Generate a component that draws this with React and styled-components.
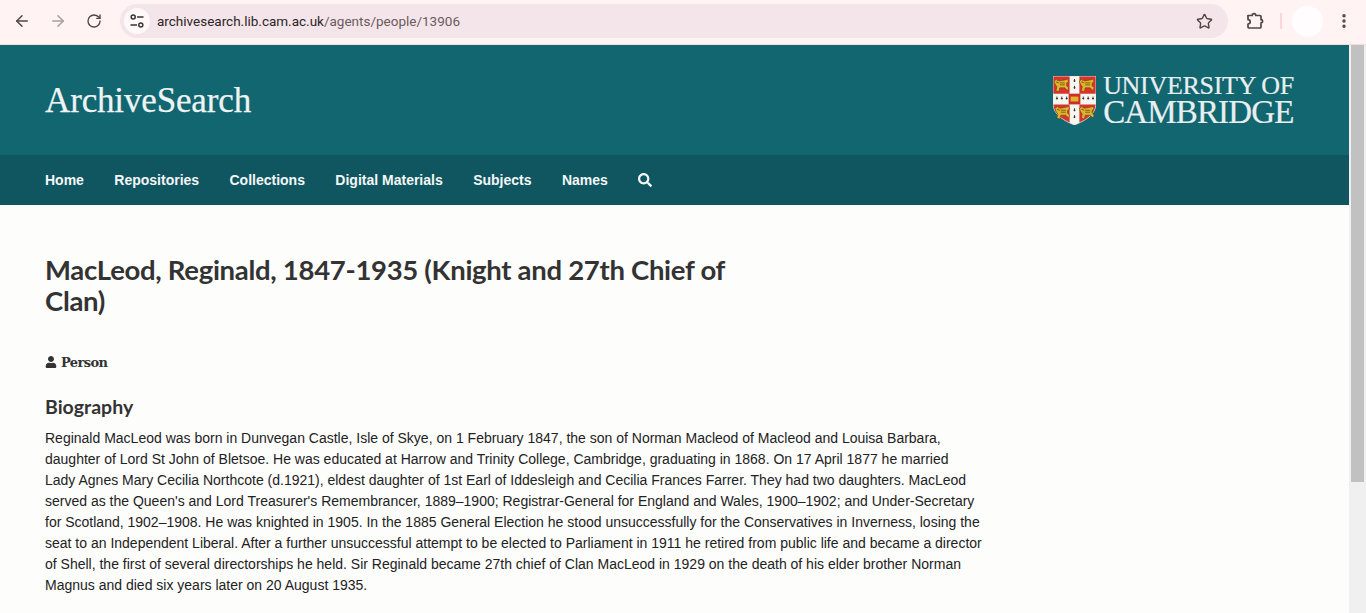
import React from 'react'
import styled, { createGlobalStyle } from 'styled-components'
import { ArrowLeft, ArrowRight, RotateCw, Star, EllipsisVertical } from 'lucide-react'
import { FaSearch, FaUser } from 'react-icons/fa'

const GlobalStyle = createGlobalStyle`
    html, body {
        margin: 0;
        height: 613px;
        overflow: hidden;
        background: #fdfdfc;
    }
    * {
        box-sizing: border-box;
    }
`

const Shell = styled.div`
    width: 1366px;
    height: 613px;
    display: flex;
    flex-direction: column;
    overflow: hidden;
`

const BrowserBar = styled.div`
    height: 45px;
    flex: none;
    display: flex;
    align-items: flex-start;
    background: #fff4f3;
    border-bottom: 1px solid #f1dfe0;
    padding: 4px 0 0 4px;
`

const NavIcon = styled.div`
    width: 36px;
    height: 34px;
    display: flex;
    align-items: center;
    justify-content: center;
    color: ${p => (p.$muted ? '#ac9d9e' : '#524445')};
`

const Omnibox = styled.div`
    width: 1108px;
    height: 34px;
    margin-left: 8px;
    padding: 0 15.5px 0 4px;
    display: flex;
    align-items: center;
    border-radius: 17px;
    background: #f3e5e9;
    color: #524445;
`

const TuneBadge = styled.div`
    width: 26px;
    height: 26px;
    border-radius: 50%;
    background: #fff8f8;
    display: flex;
    align-items: center;
    justify-content: center;
    margin-right: 7px;
`

const Url = styled.div`
    flex: 1;
    font: 13.5px 'Roboto', 'Liberation Sans', sans-serif;
    color: #6b5b60;
    b {
        font-weight: 400;
        color: #2e2526;
    }
`

const BarRight = styled.div`
    display: flex;
    align-items: center;
    height: 34px;
    margin-left: 9px;
    color: #524445;
`

const Divider = styled.div`
    width: 2px;
    height: 16px;
    margin: 0 10px 0 7px;
    background: #fbd5dc;
`

const Avatar = styled.div`
    width: 31px;
    height: 31px;
    border-radius: 50%;
    background: #fffdfd;
    margin-right: 12px;
`

const Viewport = styled.div`
    flex: 1;
    display: flex;
    min-height: 0;
`

const Page = styled.div`
    flex: 1;
    min-width: 0;
    overflow: hidden;
    background: #fdfdfc;
`

const Scrollbar = styled.div`
    width: 17px;
    flex: none;
    padding: 0 2px;
    background: #f0f0f0;
`

const ScrollThumb = styled.div`
    height: 437px;
    background: #c1c1c1;
`

const Masthead = styled.header`
    height: 110px;
    padding: 0 55px 0 45px;
    display: flex;
    align-items: center;
    justify-content: space-between;
    background: #12666f;
`

const SiteName = styled.div`
    padding-top: 2px;
    font: 35px 'Liberation Serif', serif;
    letter-spacing: -0.15px;
    color: #eef3f4;
    -webkit-text-stroke: 0.25px #eef3f4;
`

const UniLogo = styled.div`
    display: flex;
    align-items: center;
    gap: 7px;
`

const UniName = styled.div`
    font-family: 'Liberation Serif', serif;
    color: #e9eff0;
    margin-bottom: 1px;
    -webkit-text-stroke: 0.2px #e9eff0;
`

const UniLine = styled.div`
    font-size: ${p => p.$size}px;
    line-height: ${p => p.$height}px;
    letter-spacing: ${p => p.$spacing}px;
    white-space: nowrap;
`

const MainNav = styled.nav`
    height: 50px;
    padding-left: 45px;
    display: flex;
    align-items: center;
    gap: 30.4px;
    background: #0f5661;
`

const NavLink = styled.a`
    font: bold 14px 'Liberation Sans', sans-serif;
    color: #f4f7f7;
    display: flex;
    align-items: center;
`

const Content = styled.main`
    padding: 49px 0 0 45px;
`

const Title = styled.h1`
    width: 690px;
    margin: 0;
    font: bold 27.5px/31px 'Lato', sans-serif;
    letter-spacing: -0.3px;
    color: #333333;
`

const AgentType = styled.div`
    display: flex;
    align-items: center;
    gap: 4px;
    margin-top: 37px;
    height: 18px;
    font: bold 13px 'DejaVu Serif', serif;
    letter-spacing: -0.6px;
    color: #333333;
`

const SectionTitle = styled.h2`
    margin: 23px 0 0;
    font: bold 19.5px/26px 'Lato', sans-serif;
    color: #333333;
`

const Bio = styled.p`
    width: 937px;
    margin: 8px 0 0;
    font: 14px/21px 'Liberation Sans', sans-serif;
    color: #222222;
`

const TuneIcon = () => (
    <svg width="16" height="16" viewBox="0 0 16 16" fill="none" stroke="#3c3132" strokeWidth="1.5">
        <circle cx="4.2" cy="4" r="2" />
        <path d="M8 4h6.5M1.5 12H8" />
        <circle cx="11.8" cy="12" r="2" />
    </svg>
)

// chrome's extensions icon, lucide's puzzle is a different shape
const ExtensionIcon = () => (
    <svg width="18" height="18" viewBox="0 0 18 18" fill="none" stroke="currentColor" strokeWidth="1.7" strokeLinejoin="round">
        <path d="M2 3.5h4.2a1.8 1.8 0 0 1 3.6 0H14a1 1 0 0 1 1 1v3.2a1.6 1.6 0 0 1 0 3.2V15a1 1 0 0 1-1 1H3a1 1 0 0 1-1-1v-3a2.2 2.2 0 0 0 0-4.4V4.5a1 1 0 0 1 0-1z" />
    </svg>
)

const Lion = ({ x, y }) => (
    <g transform={`translate(${x} ${y})`}>
        <path d="M0 2l3-2 2 2 6-1 3-1 1 3-2 1v3l2 2-1 3-3-3H6l-1 4-3-1 1-4-2-3z" fill="#e0b52c" stroke="#5b3a10" strokeWidth=".5" />
        <path d="M2 3l3 1M6 4h5M6 6h5M3 1.5h1" stroke="#5b3a10" strokeWidth=".7" />
    </g>
)

const Ermine = ({ x, y }) => (
    <path d={`M${x} ${y}v3M${x - 1} ${y + 2}h2`} stroke="#222" strokeWidth=".9" />
)

const Shield = () => (
    <svg width="43" height="49" viewBox="0 0 44 50">
        <path d="M0 0h44v28C44 40 32 46 22 50 12 46 0 40 0 28z" fill="#d8332c" />
        <path d="M17 0h10v48l-5 2-5-2z" fill="#f7f5f0" />
        <path d="M0 18h44v11H0z" fill="#f7f5f0" />
        <path d="M0 0h44v28C44 40 32 46 22 50 12 46 0 40 0 28z" fill="none" stroke="#e8e4dc" strokeWidth=".8" />
        <Lion x={1} y={3} />
        <Lion x={27} y={3} />
        <Lion x={2} y={31} />
        <Lion x={27} y={31} />
        {[4, 9, 14, 31, 36, 41].map(x => <Ermine key={x} x={x} y={21} />)}
        {[3, 10, 33, 40].map(y => <Ermine key={y} x={22} y={y} />)}
        <rect x="16" y="18" width="12" height="11" fill="#c9302a" />
        <rect x="18" y="21" width="8" height="5" fill="#e0b52c" />
    </svg>
)

const links = ['Home', 'Repositories', 'Collections', 'Digital Materials', 'Subjects', 'Names']

const App = () => {
    return (
        <Shell>
            <GlobalStyle />
            <BrowserBar>
                <NavIcon><ArrowLeft size={18} strokeWidth={2} /></NavIcon>
                <NavIcon $muted><ArrowRight size={18} strokeWidth={2} /></NavIcon>
                <NavIcon><RotateCw size={16} strokeWidth={2} /></NavIcon>
                <Omnibox>
                    <TuneBadge><TuneIcon /></TuneBadge>
                    <Url><b>archivesearch.lib.cam.ac.uk</b>/agents/people/13906</Url>
                    <Star size={17} strokeWidth={2} />
                </Omnibox>
                <BarRight>
                    <NavIcon><ExtensionIcon /></NavIcon>
                    <Divider />
                    <Avatar />
                    <EllipsisVertical size={18} strokeWidth={2.6} />
                </BarRight>
            </BrowserBar>
            <Viewport>
                <Page>
                    <Masthead>
                        <SiteName>ArchiveSearch</SiteName>
                        <UniLogo>
                            <Shield />
                            <UniName>
                                <UniLine $size={26} $height={24} $spacing={-0.3}>UNIVERSITY OF</UniLine>
                                <UniLine $size={33} $height={28} $spacing={-0.85}>CAMBRIDGE</UniLine>
                            </UniName>
                        </UniLogo>
                    </Masthead>
                    <MainNav>
                        {links.map(l => <NavLink key={l}>{l}</NavLink>)}
                        <NavLink><FaSearch size={14} /></NavLink>
                    </MainNav>
                    <Content>
                        <Title>MacLeod, Reginald, 1847-1935 (Knight and 27th Chief of Clan)</Title>
                        <AgentType><FaUser size={12} />Person</AgentType>
                        <SectionTitle>Biography</SectionTitle>
                        <Bio>
                            Reginald MacLeod was born in Dunvegan Castle, Isle of Skye, on 1 February 1847, the son of Norman Macleod of Macleod and Louisa Barbara, daughter of Lord St John of Bletsoe. He was educated at Harrow and Trinity College, Cambridge, graduating in 1868. On 17 April 1877 he married Lady Agnes Mary Cecilia Northcote (d.1921), eldest daughter of 1st Earl of Iddesleigh and Cecilia Frances Farrer. They had two daughters. MacLeod served as the Queen's and Lord Treasurer's Remembrancer, 1889–1900; Registrar-General for England and Wales, 1900–1902; and Under-Secretary for Scotland, 1902–1908. He was knighted in 1905. In the 1885 General Election he stood unsuccessfully for the Conservatives in Inverness, losing the seat to an Independent Liberal. After a further unsuccessful attempt to be elected to Parliament in 1911 he retired from public life and became a director of Shell, the first of several directorships he held. Sir Reginald became 27th chief of Clan MacLeod in 1929 on the death of his elder brother Norman Magnus and died six years later on 20 August 1935.
                        </Bio>
                    </Content>
                </Page>
                <Scrollbar><ScrollThumb /></Scrollbar>
            </Viewport>
        </Shell>
    )
}

export default App
